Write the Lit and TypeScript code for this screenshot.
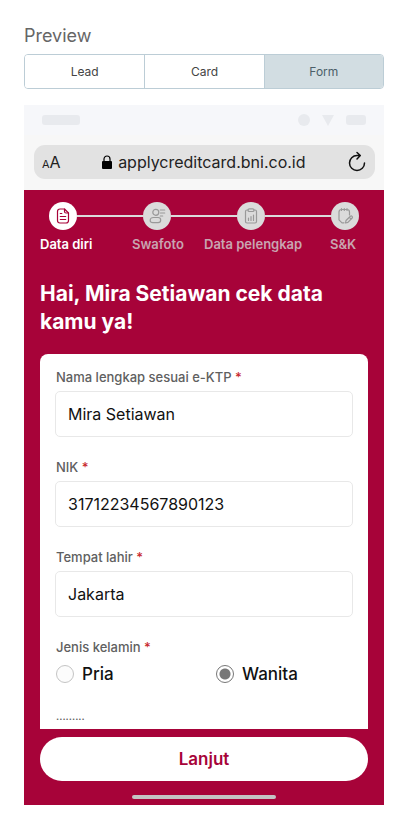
import { LitElement, html, css, svg } from "lit";
import { customElement, state } from "lit/decorators.js";
import { classMap } from "lit/directives/class-map.js";

const stepIcons = [
  svg`<path d="M6 2h4.500l4 4v7.500q0 2.500-2.500 2.500H6q-2.500 0-2.500-2.500v-9Q3.500 2 6 2z"/><path d="M10.500 2v2.500Q10.500 6 12 6h2.500M6.300 6.500h1.500M6.300 9.500h5.400M6.300 12.500h5.400"/>`,
  svg`<circle cx="7.800" cy="5.300" r="3"/><path d="M5.500 10.500h4.600q2.600 0 2.600 2.600t-2.600 2.600H4.800q-2.600 0-2.600-2.200 0-3 3.300-3z"/><path d="M12.300 3h4.400M12.500 6h4.200M12.300 9h2.400"/>`,
  svg`<path d="M6 3H5Q3.500 3 3.500 4.500v10Q3.500 16 5 16h8q1.500 0 1.500-1.500v-10Q14.500 3 13 3h-1"/><rect x="6" y="1.800" width="6" height="2.700" rx="1.300"/><path d="M6.500 11v2.500M9 9.500v4M11.500 8v5.500"/>`,
  svg`<path d="M8 15.800H6l-3-3V5q0-2.500 2.500-2.500H11q2.500 0 2.500 2.500v3M5.500 1.500v2M8.300 1.500v2M11 1.500v2"/><path d="M9.500 16l.5-2.500 4.400-4.300q.9-.7 1.700.1t.1 1.700l-4.300 4.400zM13.300 10.300l1.800 1.800"/>`,
];

@customElement("app-root")
export class AppRoot extends LitElement {
  static styles = css`
    :host {
      display: block;
      box-sizing: border-box;
      padding: 24px;
      background: #fff;
      color: #222;
      font-family: Inter, "Liberation Sans", sans-serif;
    }
    * { box-sizing: border-box; }
    h1, h2, ol { margin: 0; padding: 0; }
    button, input { font: inherit; color: inherit; margin: 0; }
    button { cursor: pointer; }
    .title {
      font-size: 18px;
      line-height: 24px;
      font-weight: 400;
      color: #666;
      margin-bottom: 6px;
    }
    .tabs {
      display: grid;
      grid-template-columns: repeat(3, 1fr);
      height: 35px;
      border: 1px solid #bccdd6;
      border-radius: 4px;
      overflow: hidden;
      margin-bottom: 16px;
    }
    .tab {
      border: 0;
      padding: 0;
      background: #fff;
      color: #444;
      font-size: 12px;
    }
    .tab + .tab { border-left: 1px solid #bccdd6; }
    .tab.active { background: #d2dde2; color: #4c5f69; }
    .browser { background: #f7f7f7; padding-bottom: 11px; }
    .status {
      display: flex;
      align-items: center;
      height: 30px;
      padding: 0 18px;
      background: #f6f7fa;
      margin-bottom: 10px;
    }
    .pill { width: 20px; height: 10px; border-radius: 3px; background: #e8eaee; }
    .pill.wide { width: 38px; margin-right: auto; }
    .signal { fill: #e8eaee; margin-right: 12px; }
    .address {
      display: flex;
      align-items: center;
      justify-content: space-between;
      height: 34px;
      margin: 0 9px 0 10px;
      padding: 0 8px;
      border-radius: 11px;
      background: #e2e2e2;
    }
    .plain { border: 0; padding: 0; background: none; display: flex; align-items: baseline; }
    .small { font-size: 11px; }
    .large { font-size: 16px; }
    .url { display: flex; align-items: center; gap: 6px; font-size: 16px; }
    .screen { background: #a70339; padding: 12px 16px 6px; color: #fff; }
    .track { display: flex; align-items: center; padding: 0 9px; margin-bottom: 6px; }
    .dot {
      display: flex;
      align-items: center;
      justify-content: center;
      width: 28px;
      height: 28px;
      border-radius: 50%;
      background: #dbdbdb;
      color: #999;
    }
    .dot.current { background: #fff; color: #a70339; }
    .dot svg {
      fill: none;
      stroke: currentColor;
      stroke-width: 1.2;
      stroke-linecap: round;
      stroke-linejoin: round;
    }
    .line { flex: 1; height: 2px; background: #dbdbdb; }
    .steps {
      display: grid;
      grid-template-columns: 92fr 72fr 126fr 38fr;
      list-style: none;
      font-size: 13px;
      line-height: 16px;
      font-weight: 600;
      color: #c9a5b1;
      white-space: nowrap;
      margin-bottom: 28px;
    }
    .steps .current { color: #fff; }
    .greeting { font-size: 21px; line-height: 28px; font-weight: 700; margin-bottom: 18px; }
    .card {
      background: #fff;
      color: #111;
      border-radius: 8px 8px 0 0;
      padding: 15px 15px 5px;
      margin-bottom: 8px;
    }
    .field { display: flex; flex-direction: column; gap: 6px; margin-bottom: 22px; }
    .label {
      font-size: 13px;
      line-height: 16px;
      font-weight: 500;
      color: #606060;
      padding: 0 1px;
    }
    .required { color: #c8282d; }
    .text {
      width: 100%;
      height: 46px;
      padding: 0 12px;
      border: 1px solid #e8e8e8;
      border-radius: 5px;
      background: #fff;
      font-size: 16px;
    }
    .group { margin-bottom: 24px; }
    .group .label { margin-bottom: 9px; }
    .options { display: grid; grid-template-columns: 1fr 1fr; column-gap: 24px; padding: 0 1px; }
    .option { display: flex; align-items: center; gap: 8px; font-size: 17px; line-height: 20px; font-weight: 500; }
    .radio {
      appearance: none;
      width: 18px;
      height: 18px;
      border: 1px solid #c4c4c4;
      border-radius: 50%;
      background: #fcfcfc;
    }
    .radio:checked {
      border-color: #777;
      background: radial-gradient(circle, #777 5px, #fff 6px);
    }
    .more { font-size: 10px; line-height: 16px; font-weight: 600; color: #606060; padding: 0 1px; }
    .submit {
      display: block;
      width: 100%;
      height: 44px;
      border: 0;
      border-radius: 22px;
      background: #fff;
      color: #a70339;
      font-size: 17px;
      font-weight: 600;
      margin-bottom: 14px;
    }
    .home { width: 144px; height: 4px; border-radius: 2px; background: #c4c4c4; margin: 0 auto; }
  `;

  @state() private tab = "Form";

  private field(id: string, label: string, value: string) {
    return html`<div class="field">
      <label class="label" for=${id}>${label} <span class="required">*</span></label>
      <input class="text" id=${id} type="text" .value=${value} />
    </div>`;
  }

  render() {
    return html`
      <h1 class="title">Preview</h1>
      <div class="tabs">
        ${["Lead", "Card", "Form"].map(
          (name) => html`<button
            class=${classMap({ tab: true, active: name === this.tab })}
            aria-pressed=${name === this.tab}
            @click=${() => (this.tab = name)}
          >${name}</button>`
        )}
      </div>
      <div class="browser">
        <div class="status">
          <span class="pill wide"></span>
          <svg class="signal" width="12" height="12"><circle cx="6" cy="6" r="6" /></svg>
          <svg class="signal" width="12" height="12"><path d="M0 1h12L6 12z" /></svg>
          <span class="pill"></span>
        </div>
        <div class="address">
          <button class="plain"><span class="small">A</span><span class="large">A</span></button>
          <div class="url">
            <svg width="10" height="15" viewBox="0 0 10 15">
              <rect x="0" y="6" width="10" height="8" rx="1" />
              <path d="M2 6V4a3 3 0 0 1 6 0v2" fill="none" stroke="#000" stroke-width="1.200" />
            </svg>
            <span>applycreditcard.bni.co.id</span>
          </div>
          <button class="plain" aria-label="Reload">
            <svg width="20" height="22" viewBox="0 0 20 22" fill="none" stroke="#111" stroke-width="1.500" stroke-linecap="round" stroke-linejoin="round">
              <path d="M17.500 12A7.500 7.500 0 1 1 10 4.500h3M10 1.500l3.300 3-3.300 3.500" />
            </svg>
          </button>
        </div>
      </div>
      <div class="screen">
        <div class="track" aria-hidden="true">
          ${stepIcons.map(
            (icon, i) => html`${i ? html`<span class="line"></span>` : ""}
              <span class=${classMap({ dot: true, current: i === 0 })}>
                <svg width="18" height="18" viewBox="0 0 18 18">${icon}</svg>
              </span>`
          )}
        </div>
        <ol class="steps">
          <li class="current" aria-current="step">Data diri</li>
          <li>Swafoto</li>
          <li>Data pelengkap</li>
          <li>S&amp;K</li>
        </ol>
        <h2 class="greeting">Hai, Mira Setiawan cek data kamu ya!</h2>
        <div class="card">
          ${this.field("name", "Nama lengkap sesuai e-KTP", "Mira Setiawan")}
          ${this.field("nik", "NIK", "31712234567890123")}
          ${this.field("birthplace", "Tempat lahir", "Jakarta")}
          <div class="group" role="radiogroup" aria-labelledby="gender">
            <div class="label" id="gender">Jenis kelamin <span class="required">*</span></div>
            <div class="options">
              <label class="option"><input class="radio" type="radio" name="gender" />Pria</label>
              <label class="option"><input class="radio" type="radio" name="gender" checked />Wanita</label>
            </div>
          </div>
          <div class="more">.........</div>
        </div>
        <button class="submit">Lanjut</button>
        <div class="home"></div>
      </div>
    `;
  }
}
